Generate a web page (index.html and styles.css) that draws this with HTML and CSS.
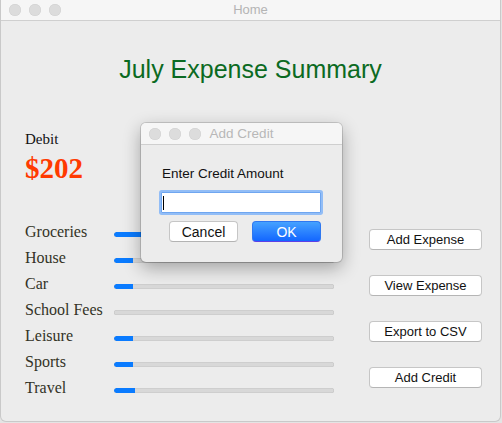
FILE: index.html
```html
<!DOCTYPE html>
<html>
<head>
<meta charset="utf-8">
<title>Home</title>
<link rel="stylesheet" href="styles.css">
</head>
<body>
<div class="window">
  <div class="titlebar">
    <div class="lights"><span></span><span></span><span></span></div>
    <div class="wtitle">Home</div>
  </div>
  <div class="content">
    <h1 class="heading">July Expense Summary</h1>
    <div class="debit">
      <div class="debit-label">Debit</div>
      <div class="debit-amount">$202</div>
    </div>
    <div class="main">
      <div class="rows">
        <div class="row"><span class="label">Groceries</span><div class="bar"><div class="fill" style="width:40px"></div></div></div>
        <div class="row"><span class="label">House</span><div class="bar"><div class="fill" style="width:19px"></div></div></div>
        <div class="row"><span class="label">Car</span><div class="bar"><div class="fill" style="width:19px"></div></div></div>
        <div class="row"><span class="label">School Fees</span><div class="bar"></div></div>
        <div class="row"><span class="label">Leisure</span><div class="bar"><div class="fill" style="width:19px"></div></div></div>
        <div class="row"><span class="label">Sports</span><div class="bar"><div class="fill" style="width:19px"></div></div></div>
        <div class="row"><span class="label">Travel</span><div class="bar"><div class="fill" style="width:21px"></div></div></div>
      </div>
      <div class="actions">
        <button class="btn">Add Expense</button>
        <button class="btn">View Expense</button>
        <button class="btn">Export to CSV</button>
        <button class="btn">Add Credit</button>
      </div>
    </div>
  </div>

  <div class="dialog">
    <div class="titlebar dtitlebar">
      <div class="lights"><span></span><span></span><span></span></div>
      <div class="wtitle dtitle">Add Credit</div>
    </div>
    <div class="dbody">
      <div class="prompt">Enter Credit Amount</div>
      <div class="field"><span class="caret"></span></div>
      <div class="dbuttons">
        <button class="dbtn cancel">Cancel</button>
        <button class="dbtn ok">OK</button>
      </div>
    </div>
  </div>
</div>
</body>
</html>
```

FILE: styles.css
```css
html, body {
  margin: 0;
  padding: 0;
}
body {
  background: #e4e4e4;
  width: 502px;
  height: 423px;
  overflow: hidden;
}
.window {
  position: relative;
  margin-left: 1px;
  width: 499px;
  height: 421px;
  background: #ececec;
  border-radius: 0 0 5px 5px;
  box-shadow: 0 0 0 1px #c9c9c9;
  overflow: hidden;
  font-family: "Liberation Sans", Arial, sans-serif;
}
.titlebar {
  position: relative;
  height: 20px;
  background: #f6f6f6;
  border-bottom: 1px solid #cfcfcf;
  display: flex;
  align-items: center;
}
.lights {
  display: flex;
  gap: 8px;
  padding-left: 8px;
}
.lights span {
  display: block;
  width: 12px;
  height: 12px;
  border-radius: 50%;
  background: #dcdcdc;
  box-shadow: inset 0 0 0 0.5px #d0d0d0;
}
.wtitle {
  position: absolute;
  left: 0;
  right: 0;
  top: 0;
  line-height: 20px;
  text-align: center;
  font-size: 13px;
  color: #b4b4b4;
}
.content {
  padding: 0 0 0 24px;
}
.heading {
  margin: 34px 0 0 -24px;
  font-weight: normal;
  font-size: 25px;
  line-height: 28px;
  text-align: center;
  color: #0b6a22;
}
.debit {
  margin-top: 48px;
  font-family: "Liberation Serif", "Times New Roman", serif;
}
.debit-label {
  font-size: 15px;
  line-height: 17px;
  color: #111;
}
.debit-amount {
  margin-top: 4px;
  font-size: 29px;
  line-height: 33px;
  font-weight: bold;
  color: #ff3a00;
}
.main {
  margin-top: 34px;
  display: flex;
}
.rows {
  display: flex;
  flex-direction: column;
}
.row {
  display: flex;
  align-items: flex-start;
  height: 26px;
}
.label {
  width: 89px;
  font-family: "Liberation Serif", "Times New Roman", serif;
  font-size: 16px;
  line-height: 26px;
  color: #333326;
}
.bar {
  margin-top: 13px;
  width: 220px;
  height: 5px;
  box-sizing: border-box;
  border-radius: 3px;
  background: #d8d8d8;
  box-shadow: inset 0 0 0 0.5px #c4c4c4;
  overflow: hidden;
}
.fill {
  height: 100%;
  background: #0a7bff;
  border-radius: 3px 0 0 3px;
}
.actions {
  margin-left: 35px;
  padding-top: 10px;
  display: flex;
  flex-direction: column;
  gap: 25px;
}
.btn {
  width: 113px;
  height: 21px;
  padding: 0;
  background: #ffffff;
  border: 1px solid #c6c6c6;
  border-bottom-color: #b5b5b5;
  border-radius: 4px;
  font-family: "Liberation Sans", Arial, sans-serif;
  font-size: 13px;
  color: #111;
}
.dialog {
  position: absolute;
  left: 140px;
  top: 123px;
  width: 201px;
  height: 139px;
  background: #ececec;
  border-radius: 5px;
  box-shadow: 0 0 0 1px rgba(0,0,0,0.14), 0 6px 18px rgba(0,0,0,0.32);
  overflow: hidden;
}
.dtitlebar {
  height: 21px;
}
.dtitle {
  line-height: 21px;
  font-size: 13.5px;
  color: #b8b8b8;
}
.dbody {
  padding: 21px 0 0 0;
}
.prompt {
  margin-left: 21px;
  font-size: 13.5px;
  line-height: 16px;
  color: #111;
}
.field {
  margin: 10px 0 0 20px;
  width: 160px;
  height: 21px;
  box-sizing: border-box;
  background: #fff;
  border: 1px solid #6fa6f0;
  box-shadow: 0 0 0 2px #92bdf6;
  border-radius: 1px;
  display: flex;
  align-items: center;
  padding-left: 1px;
}
.caret {
  display: block;
  width: 1px;
  height: 14px;
  background: #000;
}
.dbuttons {
  margin: 8px 0 0 28px;
  display: flex;
  gap: 14px;
}
.dbtn {
  width: 69px;
  height: 21px;
  padding: 0;
  border-radius: 4px;
  font-family: "Liberation Sans", Arial, sans-serif;
  font-size: 14px;
}
.cancel {
  background: #fff;
  border: 1px solid #c6c6c6;
  border-bottom-color: #b3b3b3;
  color: #111;
}
.ok {
  background: linear-gradient(#45a2ff, #1366ff);
  border: 1px solid #2f78f0;
  border-bottom-color: #5d3fe6;
  color: #fff;
}
```
